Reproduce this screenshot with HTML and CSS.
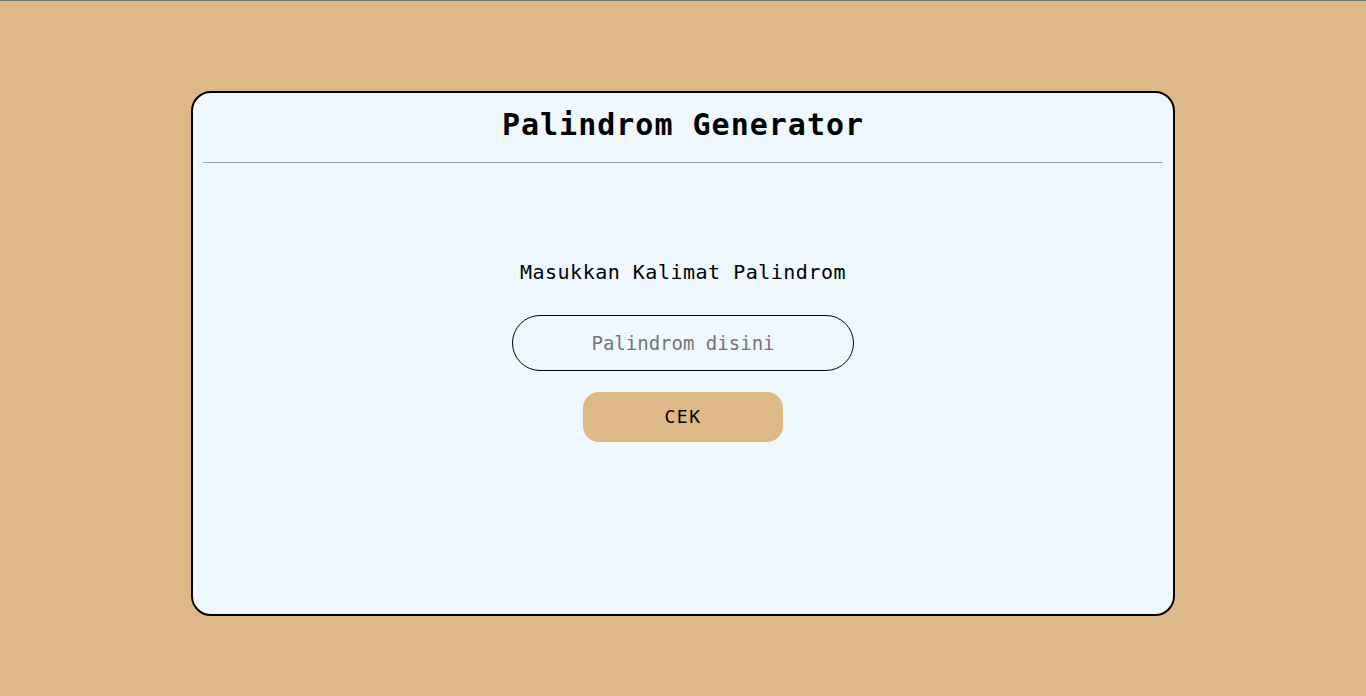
FILE: index.html
```html
<!DOCTYPE html>
<html lang="id">
<head>
<meta charset="utf-8">
<title>Palindrom Generator</title>
<link rel="stylesheet" href="styles.css">
</head>
<body>
<div class="card">
  <header class="card-header">
    <h1 class="title">Palindrom Generator</h1>
  </header>
  <hr class="divider">
  <main class="form">
    <label class="label" for="kalimat">Masukkan Kalimat Palindrom</label>
    <input class="input" id="kalimat" type="text" placeholder="Palindrom disini">
    <button class="btn" type="button">CEK</button>
  </main>
</div>
</body>
</html>
```
FILE: styles.css
```css
html, body {
  margin: 0;
  padding: 0;
}
body {
  background: #deb887;
  border-top: 1px solid #6f7f70;
  min-height: 695px;
  box-sizing: border-box;
  font-family: "DejaVu Sans Mono", "Liberation Mono", monospace;
  color: #000;
  padding-top: 90px;
}
.card {
  box-sizing: border-box;
  width: 984px;
  height: 525px;
  margin: 0 auto;
  background: #f0f8ff;
  border: 2px solid #000;
  border-radius: 20px;
  display: flex;
  flex-direction: column;
}
.card-header {
  padding: 14px 0 19px;
  text-align: center;
}
.title {
  margin: 0;
  font-size: 30px;
  line-height: 36px;
  font-weight: bold;
  letter-spacing: 1px;
}
.divider {
  margin: 0 10px;
  border: 0;
  border-top: 1px solid #a0a0a0;
  height: 0;
}
.form {
  display: flex;
  flex-direction: column;
  align-items: center;
  padding-top: 97px;
}
.label {
  font-size: 20px;
  line-height: 24px;
  letter-spacing: 0.5px;
}
.input {
  box-sizing: border-box;
  margin-top: 31px;
  width: 342px;
  height: 56px;
  border: 1.5px solid #000;
  border-radius: 28px;
  background: transparent;
  font-family: inherit;
  font-size: 19px;
  text-align: center;
  outline: none;
}
.input::placeholder {
  color: #757575;
}
.btn {
  margin-top: 21px;
  width: 200px;
  height: 50px;
  border: 0;
  border-radius: 16px;
  background: #deb887;
  font-family: inherit;
  font-size: 18px;
  letter-spacing: 1.5px;
  color: #000;
  padding-bottom: 2px;
}
```
